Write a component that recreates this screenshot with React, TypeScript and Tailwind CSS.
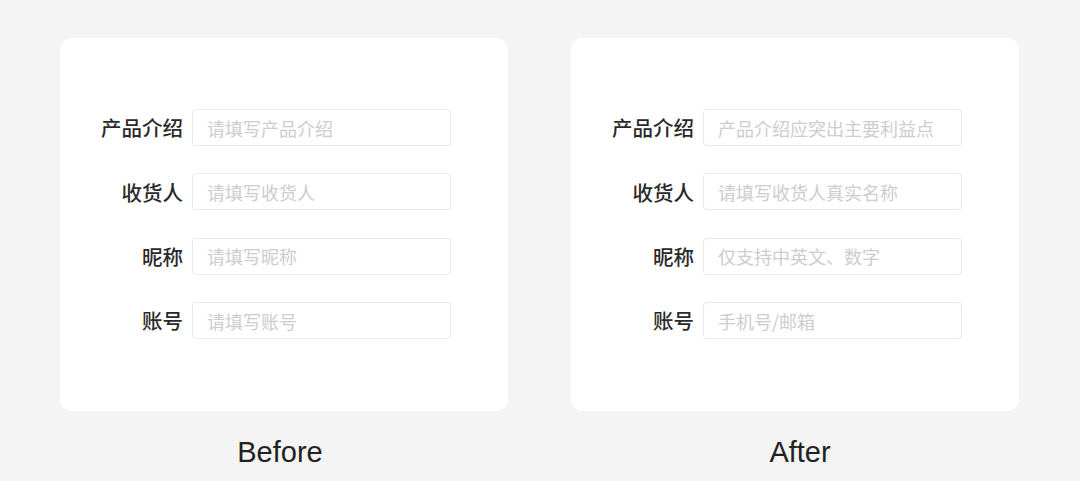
import React from "react";

const cjk = { fontFamily: '"Noto Sans CJK SC", "Noto Sans", sans-serif' };

type Row = { label: string; ph: string };

const before: Row[] = [
  { label: "产品介绍", ph: "请填写产品介绍" },
  { label: "收货人", ph: "请填写收货人" },
  { label: "昵称", ph: "请填写昵称" },
  { label: "账号", ph: "请填写账号" },
];

const after: Row[] = [
  { label: "产品介绍", ph: "产品介绍应突出主要利益点" },
  { label: "收货人", ph: "请填写收货人真实名称" },
  { label: "昵称", ph: "仅支持中英文、数字" },
  { label: "账号", ph: "手机号/邮箱" },
];

function Card({ rows }: { rows: Row[] }) {
  return (
    <div className="w-[448px] h-[373px] bg-white rounded-[12px] pt-[71px] flex flex-col gap-[27.4px]" style={cjk}>
      {rows.map((r) => (
        <div key={r.label} className="flex items-center h-[37px]">
          <div className="w-[123px] text-right text-[20.5px] font-medium leading-none text-[#2a2a2a]">{r.label}</div>
          <div className="ml-[9px] w-[259px] h-[37px] border border-[#e8e8e8] rounded-[4px] flex items-center pl-[14px] text-[18px] leading-none text-[#cdcdcd]">
            {r.ph}
          </div>
        </div>
      ))}
    </div>
  );
}

export default function App() {
  return (
    <div className="w-[1080px] h-[481px] bg-[#f4f4f4] pt-[38px] pl-[60px] overflow-hidden">
      <div className="flex gap-[63px]">
        <Card rows={before} />
        <Card rows={after} />
      </div>
      <div className="flex gap-[63px] mt-[25px]" style={{ fontFamily: '"Liberation Sans", Arial, sans-serif' }}>
        <div className="w-[448px] pr-[8px] text-center text-[29px] leading-[32px] text-[#222222]">Before</div>
        <div className="w-[448px] pl-[10px] text-center text-[29px] leading-[32px] text-[#222222]">After</div>
      </div>
    </div>
  );
}
